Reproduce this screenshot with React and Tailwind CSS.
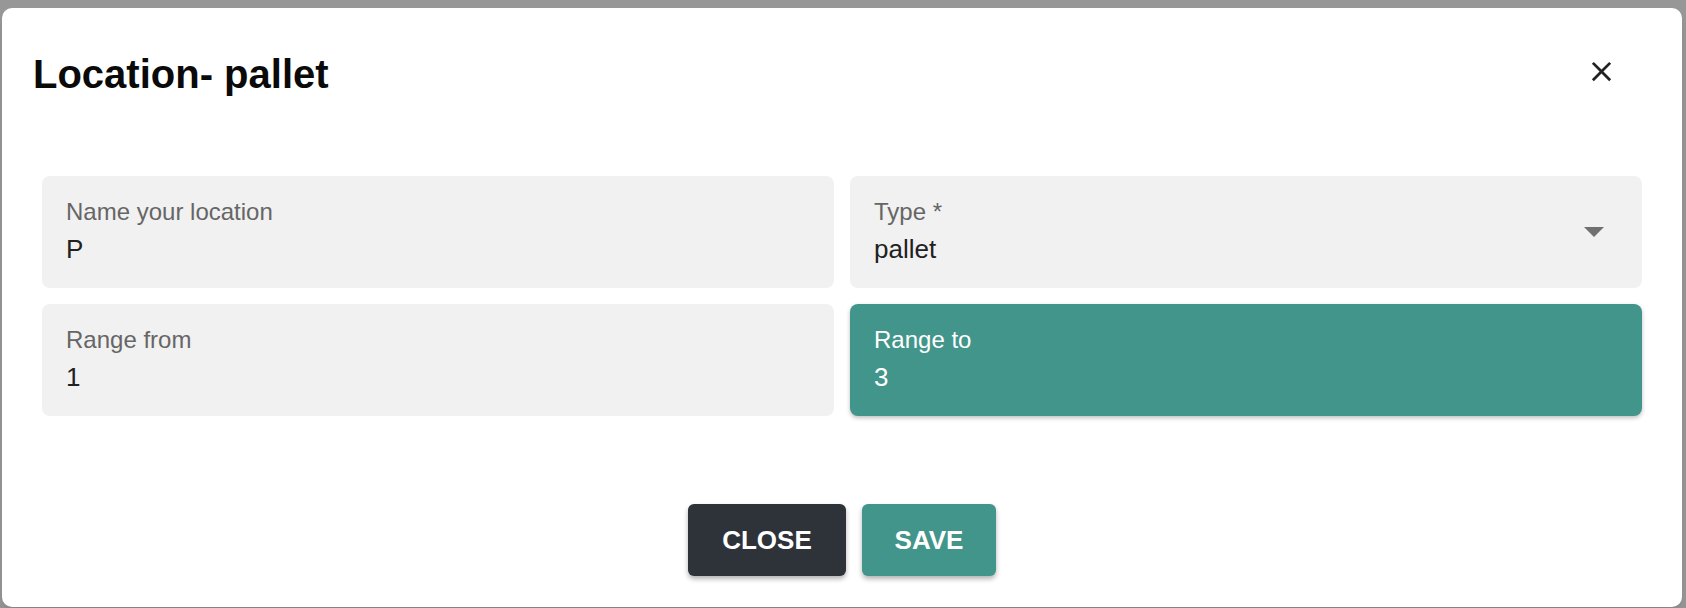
import React, { useState } from "react";

const font = { fontFamily: '"Liberation Sans", Arial, Helvetica, sans-serif' };

function Field({ label, value, active, select }) {
  return (
    <div
      className={
        active
          ? "h-[112px] rounded-[8px] bg-[#42958a] pl-6 pt-6 pr-[38px] flex items-center justify-between shadow-[0_2px_4px_rgba(0,0,0,0.25)]"
          : "h-[112px] rounded-[8px] bg-[#f1f1f1] pl-6 pt-6 pr-[38px] flex items-center justify-between"
      }
    >
      <div className="self-start">
        <div className={active ? "text-[24px] leading-[24px] text-white" : "text-[24px] leading-[24px] text-[#666666]"}>
          {label}
        </div>
        <div className={active ? "mt-[10px] text-[26px] leading-[30px] text-white" : "mt-[10px] text-[26px] leading-[30px] text-[#212121]"}>
          {value}
        </div>
      </div>
      {select && (
        <svg width="20" height="10" viewBox="0 0 20 10" className="-mt-6">
          <polygon points="0,0 20,0 10,10" fill="#707070" />
        </svg>
      )}
    </div>
  );
}

export default function App() {
  const [open] = useState(true);

  return (
    <div className="w-[1686px] h-[608px] bg-[#979797] overflow-hidden pt-2 pl-[2px]" style={font}>
      {open && (
        <div className="w-[1680px] h-[599px] bg-white rounded-[10px] shadow-lg">
          {/* header */}
          <div className="flex items-start justify-between pt-[42px] pl-[31px] pr-[64px]">
            <h2 className="text-[40px] leading-[48px] font-bold text-[#0a0a0a]">Location- pallet</h2>
            <button className="mt-[5px] text-[#222]">
              <svg width="33" height="33" viewBox="0 0 24 24" fill="currentColor">
                <path d="M19 6.41 17.59 5 12 10.59 6.41 5 5 6.41 10.59 12 5 17.59 6.41 19 12 13.41 17.59 19 19 17.59 13.41 12z" />
              </svg>
            </button>
          </div>

          {/* form */}
          <div className="mt-[78px] px-10 grid grid-cols-2 gap-4">
            <Field label="Name your location" value="P" />
            <Field label="Type *" value="pallet" select />
            <Field label="Range from" value="1" />
            <Field label="Range to" value="3" active />
          </div>

          {/* actions */}
          <div className="mt-[88px] flex justify-center gap-4">
            <button className="w-[158px] h-[72px] rounded-[6px] bg-[#2e3239] text-white text-[26px] font-semibold shadow-[0_3px_5px_rgba(0,0,0,0.3)]">
              CLOSE
            </button>
            <button className="w-[134px] h-[72px] rounded-[6px] bg-[#42958a] text-white text-[26px] font-semibold shadow-[0_3px_5px_rgba(0,0,0,0.3)]">
              SAVE
            </button>
          </div>
        </div>
      )}
    </div>
  );
}
